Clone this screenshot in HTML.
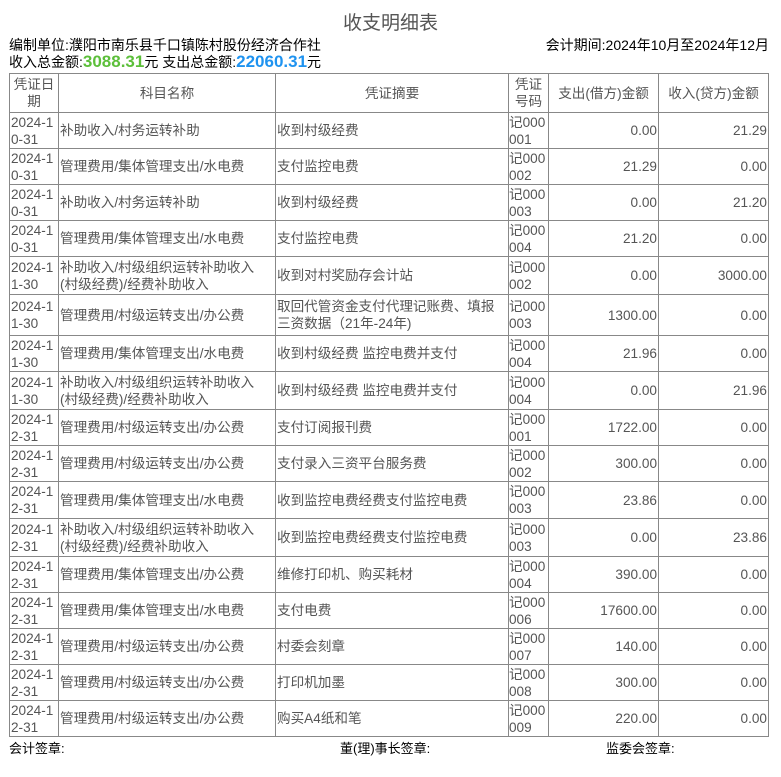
<!DOCTYPE html>
<html><head><meta charset="utf-8"><style>
body{margin:0;background:#fff;font-family:"Liberation Sans","Noto Sans CJK SC",sans-serif;color:#000;width:781px;height:777px;overflow:hidden;position:relative}
.t{position:absolute;left:0;width:781px;top:8px;text-align:center;font-size:19px;color:#555}
.l2{position:absolute;left:9px;top:35px;font-size:14px}
.r2{position:absolute;right:12px;top:35px;font-size:14px}
.l3{position:absolute;left:9px;top:52px;font-size:14px}
.g{color:#5cbf3a;font-weight:bold;font-size:17px}
.b{color:#1f93f0;font-weight:bold;font-size:17px}
table{position:absolute;left:9px;top:73px;border-collapse:collapse;table-layout:fixed;font-size:13.6px;color:#555}
td,th{border:1px solid #888;padding:0 1px;line-height:17px;overflow:hidden}
td:first-child,td:nth-child(4){word-break:break-all}
td:nth-child(4){padding:0}
th{font-weight:normal;text-align:center}
td.n{text-align:right}
.f{position:absolute;top:738px;font-size:13px}
</style></head><body>
<div class="t">收支明细表</div>
<div class="l2">编制单位:濮阳市南乐县千口镇陈村股份经济合作社</div>
<div class="r2">会计期间:2024年10月至2024年12月</div>
<div class="l3">收入总金额:<span class="g">3088.31</span>元 支出总金额:<span class="b">22060.31</span>元</div>
<table>
<colgroup><col style="width:49px"><col style="width:217px"><col style="width:233px"><col style="width:40px"><col style="width:110px"><col style="width:110px"></colgroup>
<tr style="height:39px"><th>凭证日期</th><th>科目名称</th><th>凭证摘要</th><th>凭证号码</th><th>支出(借方)金额</th><th>收入(贷方)金额</th></tr>
<tr style="height:36px"><td>2024-10-31</td><td>补助收入/村务运转补助</td><td>收到村级经费</td><td>记000001</td><td class="n">0.00</td><td class="n">21.29</td></tr>
<tr style="height:36px"><td>2024-10-31</td><td>管理费用/集体管理支出/水电费</td><td>支付监控电费</td><td>记000002</td><td class="n">21.29</td><td class="n">0.00</td></tr>
<tr style="height:36px"><td>2024-10-31</td><td>补助收入/村务运转补助</td><td>收到村级经费</td><td>记000003</td><td class="n">0.00</td><td class="n">21.20</td></tr>
<tr style="height:36px"><td>2024-10-31</td><td>管理费用/集体管理支出/水电费</td><td>支付监控电费</td><td>记000004</td><td class="n">21.20</td><td class="n">0.00</td></tr>
<tr style="height:38px"><td>2024-11-30</td><td>补助收入/村级组织运转补助收入<br>(村级经费)/经费补助收入</td><td>收到对村奖励存会计站</td><td>记000002</td><td class="n">0.00</td><td class="n">3000.00</td></tr>
<tr style="height:41px"><td>2024-11-30</td><td>管理费用/村级运转支出/办公费</td><td>取回代管资金支付代理记账费、填报三资数据（21年-24年)</td><td>记000003</td><td class="n">1300.00</td><td class="n">0.00</td></tr>
<tr style="height:36px"><td>2024-11-30</td><td>管理费用/集体管理支出/水电费</td><td>收到村级经费 监控电费并支付</td><td>记000004</td><td class="n">21.96</td><td class="n">0.00</td></tr>
<tr style="height:38px"><td>2024-11-30</td><td>补助收入/村级组织运转补助收入<br>(村级经费)/经费补助收入</td><td>收到村级经费 监控电费并支付</td><td>记000004</td><td class="n">0.00</td><td class="n">21.96</td></tr>
<tr style="height:36px"><td>2024-12-31</td><td>管理费用/村级运转支出/办公费</td><td>支付订阅报刊费</td><td>记000001</td><td class="n">1722.00</td><td class="n">0.00</td></tr>
<tr style="height:36px"><td>2024-12-31</td><td>管理费用/村级运转支出/办公费</td><td>支付录入三资平台服务费</td><td>记000002</td><td class="n">300.00</td><td class="n">0.00</td></tr>
<tr style="height:37px"><td>2024-12-31</td><td>管理费用/集体管理支出/水电费</td><td>收到监控电费经费支付监控电费</td><td>记000003</td><td class="n">23.86</td><td class="n">0.00</td></tr>
<tr style="height:38px"><td>2024-12-31</td><td>补助收入/村级组织运转补助收入<br>(村级经费)/经费补助收入</td><td>收到监控电费经费支付监控电费</td><td>记000003</td><td class="n">0.00</td><td class="n">23.86</td></tr>
<tr style="height:36px"><td>2024-12-31</td><td>管理费用/集体管理支出/办公费</td><td>维修打印机、购买耗材</td><td>记000004</td><td class="n">390.00</td><td class="n">0.00</td></tr>
<tr style="height:36px"><td>2024-12-31</td><td>管理费用/集体管理支出/水电费</td><td>支付电费</td><td>记000006</td><td class="n">17600.00</td><td class="n">0.00</td></tr>
<tr style="height:36px"><td>2024-12-31</td><td>管理费用/村级运转支出/办公费</td><td>村委会刻章</td><td>记000007</td><td class="n">140.00</td><td class="n">0.00</td></tr>
<tr style="height:36px"><td>2024-12-31</td><td>管理费用/村级运转支出/办公费</td><td>打印机加墨</td><td>记000008</td><td class="n">300.00</td><td class="n">0.00</td></tr>
<tr style="height:36px"><td>2024-12-31</td><td>管理费用/村级运转支出/办公费</td><td>购买A4纸和笔</td><td>记000009</td><td class="n">220.00</td><td class="n">0.00</td></tr>
</table>
<div class="f" style="left:9px">会计签章:</div>
<div class="f" style="left:340px">董(理)事长签章:</div>
<div class="f" style="left:606px">监委会签章:</div>
</body></html>
